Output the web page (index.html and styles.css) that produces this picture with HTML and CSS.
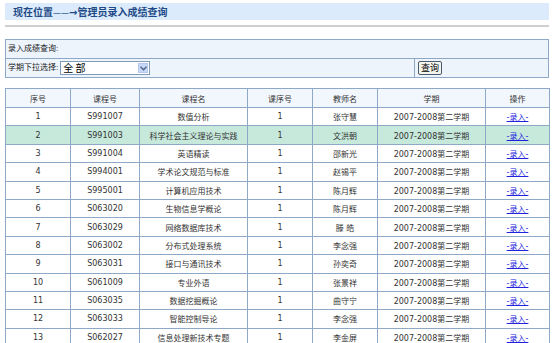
FILE: index.html
```html
<!DOCTYPE html>
<html lang="zh">
<head>
  <meta charset="UTF-8">
  <title>管理员录入成绩查询</title>
  <link rel="stylesheet" href="styles.css">
</head>
<body>
  <div class="page">
    <div class="location">现在位置<span class="dash">——</span><span class="arrow">→</span>管理员录入成绩查询</div>
    <div class="rule"></div>

    <div class="search">
      <div class="search-row">录入成绩查询:</div>
      <div class="search-row split">
        <div class="search-field">
          <span>学期下拉选择:</span>
          <div class="select">
            <span class="select-value">全 部</span>
            <span class="select-arrow">
              <svg width="7" height="5" viewBox="0 0 7 5"><path d="M0.5 0.8 L3.5 3.8 L6.5 0.8" fill="none" stroke="#4d6185" stroke-width="1.4"/></svg>
            </span>
          </div>
        </div>
        <div class="search-action"><button class="btn">查询</button></div>
      </div>
    </div>

    <table class="grades">
      <colgroup>
        <col style="width:65px"><col style="width:69px"><col style="width:108px"><col style="width:65px">
        <col style="width:65px"><col style="width:108px"><col style="width:64px">
      </colgroup>
      <thead>
        <tr><th>序号</th><th>课程号</th><th>课程名</th><th>课序号</th><th>教师名</th><th>学期</th><th>操作</th></tr>
      </thead>
      <tbody>
        <tr><td>1</td><td>S991007</td><td>数值分析</td><td>1</td><td>张守慧</td><td>2007-2008第二学期</td><td><a href="#">-录入-</a></td></tr>
        <tr class="hover"><td>2</td><td>S991003</td><td>科学社会主义理论与实践</td><td>1</td><td>文洪朝</td><td>2007-2008第二学期</td><td><a href="#">-录入-</a></td></tr>
        <tr><td>3</td><td>S991004</td><td>英语精读</td><td>1</td><td>邵新光</td><td>2007-2008第二学期</td><td><a href="#">-录入-</a></td></tr>
        <tr><td>4</td><td>S994001</td><td>学术论文规范与标准</td><td>1</td><td>赵锡平</td><td>2007-2008第二学期</td><td><a href="#">-录入-</a></td></tr>
        <tr><td>5</td><td>S995001</td><td>计算机应用技术</td><td>1</td><td>陈月辉</td><td>2007-2008第二学期</td><td><a href="#">-录入-</a></td></tr>
        <tr><td>6</td><td>S063020</td><td>生物信息学概论</td><td>1</td><td>陈月辉</td><td>2007-2008第二学期</td><td><a href="#">-录入-</a></td></tr>
        <tr><td>7</td><td>S063029</td><td>网络数据库技术</td><td>1</td><td>滕 皓</td><td>2007-2008第二学期</td><td><a href="#">-录入-</a></td></tr>
        <tr><td>8</td><td>S063002</td><td>分布式处理系统</td><td>1</td><td>李念强</td><td>2007-2008第二学期</td><td><a href="#">-录入-</a></td></tr>
        <tr><td>9</td><td>S063031</td><td>接口与通讯技术</td><td>1</td><td>孙奕奇</td><td>2007-2008第二学期</td><td><a href="#">-录入-</a></td></tr>
        <tr><td>10</td><td>S061009</td><td>专业外语</td><td>1</td><td>张景祥</td><td>2007-2008第二学期</td><td><a href="#">-录入-</a></td></tr>
        <tr><td>11</td><td>S063035</td><td>数据挖掘概论</td><td>1</td><td>曲守宁</td><td>2007-2008第二学期</td><td><a href="#">-录入-</a></td></tr>
        <tr><td>12</td><td>S063033</td><td>智能控制导论</td><td>1</td><td>李念强</td><td>2007-2008第二学期</td><td><a href="#">-录入-</a></td></tr>
        <tr><td>13</td><td>S062027</td><td>信息处理新技术专题</td><td>1</td><td>李金屏</td><td>2007-2008第二学期</td><td><a href="#">-录入-</a></td></tr>
      </tbody>
    </table>
  </div>
</body>
</html>
```

FILE: styles.css
```css
body {
  margin: 0;
  background: #fff;
  font-family: "Liberation Sans", "Noto Sans CJK SC", sans-serif;
  color: #333;
}
.page {
  padding: 3px 4px 0 5px;
}
.location {
  height: 17px;
  line-height: 17px;
  padding-left: 8px;
  background: #dcebfc;
  color: #1d4a86;
  font-family: "Noto Sans CJK SC", sans-serif;
  font-size: 10px;
  font-weight: bold;
}
.dash {
  font-family: "DejaVu Sans", sans-serif;
  font-weight: normal;
  font-size: 8px;
}
.arrow {
  font-family: "DejaVu Sans", sans-serif;
  font-weight: bold;
  font-size: 10px;
}
.rule {
  margin-top: 5px;
  height: 2px;
  background: #cfcfcf;
}
.search {
  margin-top: 12px;
  border: 1px solid #8ea9c8;
  background: #eef4fc;
  font-size: 8px;
  color: #222;
}
.search-row {
  height: 18px;
  line-height: 18px;
  padding-left: 2px;
}
.search-row + .search-row {
  border-top: 1px solid #8ea9c8;
}
.split {
  display: flex;
  padding-left: 0;
}
.search-field {
  width: 406px;
  padding-left: 2px;
  display: flex;
  align-items: center;
  gap: 2px;
  border-right: 1px solid #8ea9c8;
}
.select {
  width: 88px;
  height: 12px;
  border: 1px solid #7f9db9;
  background: #fff;
  display: flex;
  align-items: center;
  justify-content: space-between;
  font-family: "Noto Sans CJK SC", sans-serif;
  font-size: 10px;
  color: #000;
}
.select-value {
  padding-left: 2px;
  line-height: 12px;
}
.select-arrow {
  width: 10px;
  height: 10px;
  margin-right: 1px;
  background: #c6d8f7;
  border: 1px solid #b5c8ec;
  display: flex;
  align-items: center;
  justify-content: center;
  box-sizing: border-box;
}
.search-action {
  padding-left: 3px;
  display: flex;
  align-items: center;
}
.btn {
  width: 24px;
  height: 14px;
  padding: 0;
  border: 1px solid #4a5a6e;
  border-radius: 2px;
  background: #f4f4ee;
  font-family: "Noto Sans CJK SC", sans-serif;
  font-size: 9px;
  line-height: 12px;
  color: #000;
}
.grades {
  margin-top: 10px;
  width: 544px;
  border-collapse: collapse;
  table-layout: fixed;
  font-family: "DejaVu Sans", "Noto Sans CJK SC", sans-serif;
  font-size: 8px;
  color: #333;
}
.grades th,
.grades td {
  border: 1px solid #8ea9c8;
  text-align: center;
  padding: 0;
  white-space: nowrap;
  overflow: hidden;
}
.grades th {
  height: 18px;
  background: #f2f7fd;
  font-weight: normal;
}
.grades td {
  height: 17.4px;
}
.grades tr.hover td {
  background: #c6e9dc;
}
.grades a {
  color: #2222dd;
  text-decoration: underline;
}
```
